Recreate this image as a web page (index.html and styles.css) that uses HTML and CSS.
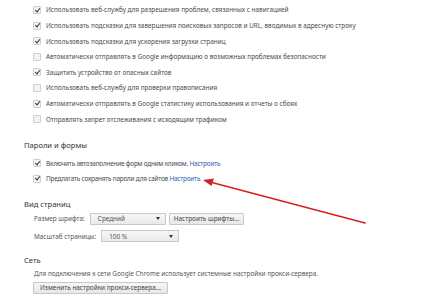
FILE: index.html
```html
<!DOCTYPE html>
<html lang="ru">
<head>
<meta charset="utf-8">
<link rel="stylesheet" href="styles.css">
</head>
<body>
<div class="page">
  <div class="rows first">
    <div class="row"><span class="cb on"></span><span>Использовать веб-службу для разрешения проблем, связанных с навигацией</span></div>
    <div class="row"><span class="cb on"></span><span>Использовать подсказки для завершения поисковых запросов и URL, вводимых в адресную строку</span></div>
    <div class="row"><span class="cb on"></span><span>Использовать подсказки для ускорения загрузки страниц</span></div>
    <div class="row"><span class="cb"></span><span>Автоматически отправлять в Google информацию о возможных проблемах безопасности</span></div>
    <div class="row"><span class="cb on"></span><span>Защитить устройство от опасных сайтов</span></div>
    <div class="row"><span class="cb"></span><span>Использовать веб-службу для проверки правописания</span></div>
    <div class="row"><span class="cb on"></span><span>Автоматически отправлять в Google статистику использования и отчеты о сбоях</span></div>
    <div class="row"><span class="cb"></span><span>Отправлять запрет отслеживания с исходящим трафиком</span></div>
  </div>

  <h3 class="heading h-pass">Пароли и формы</h3>
  <div class="rows tight">
    <div class="row"><span class="cb on"></span><span>Включить автозаполнение форм одним кликом. <a class="link">Настроить</a></span></div>
    <div class="row"><span class="cb on"></span><span>Предлагать сохранять пароли для сайтов <a class="link">Настроить</a></span></div>
  </div>

  <h3 class="heading h-view">Вид страниц</h3>
  <div class="controls">
    <div class="crow"><span class="lbl">Размер шрифта:</span><span class="select s1"><span>Средний</span><span class="caret"></span></span><span class="btn">Настроить шрифты...</span></div>
    <div class="crow r2"><span class="lbl">Масштаб страницы:</span><span class="select s2"><span>100 %</span><span class="caret"></span></span></div>
  </div>

  <h3 class="heading h-net">Сеть</h3>
  <div class="net">
    <p class="note">Для подключения к сети Google Chrome использует системные настройки прокси-сервера.</p>
    <span class="btn proxy">Изменить настройки прокси-сервера...</span>
  </div>
</div>
<svg class="arrow" width="434" height="306" viewBox="0 0 434 306">
  <line x1="365" y1="223" x2="210" y2="182" stroke="#d42020" stroke-width="1.6" stroke-linecap="round"/>
  <polygon points="203,180 214,178.5 211.5,186" fill="#d42020"/>
</svg>
</body>
</html>
```
FILE: styles.css
```css
html, body { margin: 0; padding: 0; background: #fff; }
body {
  font-family: "Noto Sans", "DejaVu Sans", sans-serif;
  font-size: 6.4px;
  color: #4a4a4a;
  width: 434px;
  height: 306px;
  overflow: hidden;
  position: relative;
}
.page { padding-top: 2px; }
.rows { padding-left: 33px; }
.rows.first { padding-top: 0.2px; }
.rows.tight { letter-spacing: -0.2px; }
.row {
  height: 15.6px;
  display: flex;
  align-items: center;
  white-space: nowrap;
}
.cb {
  width: 6px;
  height: 6px;
  border: 1px solid #cfcfcf;
  background: #f3f3f3;
  border-radius: 1px;
  margin-right: 5px;
  position: relative;
  flex: none;
}
.cb.on::after {
  content: "";
  position: absolute;
  left: 1.6px;
  top: -0.4px;
  width: 2px;
  height: 4.2px;
  border-right: 1.5px solid #333;
  border-bottom: 1.5px solid #333;
  transform: rotate(40deg);
}
.link { color: #2a5db0; }
.heading {
  margin: 0;
  padding-left: 24px;
  font-weight: normal;
  font-size: 7.6px;
  color: #333;
  height: 12px;
  line-height: 12px;
}
.h-pass { margin-top: 12.5px; margin-bottom: 4px; }
.h-view { margin-top: 11px; margin-bottom: 2.5px; }
.h-net { margin-top: 11px; margin-bottom: 3px; }
.controls { padding-left: 34px; }
.crow {
  display: flex;
  align-items: center;
  height: 13px;
}
.crow.r2 { margin-top: 4.5px; }
.lbl { margin-right: 5px; color: #555; }
.select {
  height: 10px;
  border: 1px solid #c8c8c8;
  background: linear-gradient(#f7f7f7, #e9e9e9);
  display: flex;
  align-items: center;
  justify-content: space-between;
  padding: 0 5px 0 7px;
  box-sizing: content-box;
  color: #555;
}
.s1 { width: 62px; }
.s2 { width: 64px; }
.caret {
  width: 0; height: 0;
  border-left: 2.5px solid transparent;
  border-right: 2.5px solid transparent;
  border-top: 3px solid #333;
}
.btn {
  display: inline-flex;
  align-items: center;
  height: 10px;
  border: 1px solid #c8c8c8;
  background: linear-gradient(#f7f7f7, #e7e7e7);
  padding: 0 4px;
  margin-left: 3px;
  color: #444;
  border-radius: 1px;
}
.net { padding-left: 33px; }
.note { margin: 0 0 0 1px; height: 10px; line-height: 10px; color: #555; }
.btn.proxy { margin: 3px 0 0 0; padding: 0 6px; }
.arrow { position: absolute; left: 0; top: 0; pointer-events: none; }
```
